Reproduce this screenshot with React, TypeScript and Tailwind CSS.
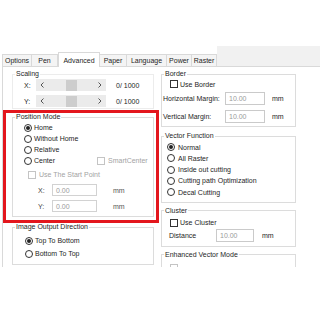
import { ReactNode } from "react";

interface GroupProp {
  title: string;
  className?: string;
  children: ReactNode;
}

const Group = ({ title, className = "", children }: GroupProp) => {
  return (
    <fieldset className={`border border-[#dcdcdc] ${className}`}>
      <legend className="ml-[2px] px-[1px] leading-[8px] text-[#1e1e1e]">
        {title}
      </legend>
      {children}
    </fieldset>
  );
};

const Radio = ({ checked = false }: { checked?: boolean }) => {
  return (
    <span className="w-[8px] h-[8px] shrink-0 rounded-full border border-[#333] bg-white flex items-center justify-center">
      {checked && <span className="w-[4px] h-[4px] rounded-full bg-[#222]" />}
    </span>
  );
};

const Check = ({ disabled = false }: { disabled?: boolean }) => {
  return (
    <span
      className={`w-[8px] h-[8px] shrink-0 border bg-white ${
        disabled ? "border-[#c4c4c4]" : "border-[#333]"
      }`}
    />
  );
};

const Input = ({ value, className = "" }: { value: string; className?: string }) => {
  return (
    <div
      className={`border border-[#cacaca] bg-white text-[#9a9a9a] flex items-center pl-[3px] ${className}`}
    >
      {value}
    </div>
  );
};

const Scroll = () => {
  return (
    <div className="w-[70px] h-[12px] bg-[#ebebeb] flex items-center">
      <svg width="4" height="6" viewBox="0 0 4 6" className="ml-[4px]">
        <polyline points="3.5,0.5 1,3 3.5,5.5" fill="none" stroke="#555" strokeWidth="1" />
      </svg>
      <div className="ml-[22px] w-[11px] h-[11px] bg-[#cdcdcd]" />
      <div className="flex-1" />
      <svg width="4" height="6" viewBox="0 0 4 6" className="mr-[4px]">
        <polyline points="0.5,0.5 3,3 0.5,5.5" fill="none" stroke="#555" strokeWidth="1" />
      </svg>
    </div>
  );
};

const tabs = ["Options", "Pen", "Advanced", "Paper", "Language", "Power", "Raster"];
const tabW: Record<string, string> = {
  Options: "w-[30px]",
  Pen: "w-[26px]",
  Advanced: "w-[42px]",
  Paper: "w-[27px]",
  Language: "w-[40px]",
  Power: "w-[25px]",
  Raster: "w-[25px]",
};

export default function App() {
  return (
    <div className="relative w-[320px] h-[320px] bg-white overflow-hidden font-['Liberation_Sans',Arial,sans-serif] text-[7px] leading-none text-[#1e1e1e]">
      <div className="h-[46px]" />
      {/* tab strip */}
      <div className="flex items-end h-[20px] pl-[2px]">
        {tabs.map((t, i) =>
          t === "Advanced" ? (
            <div
              key={t}
              className={`${tabW[t]} h-[15px] -mb-[1px] relative z-10 bg-white border-t border-x border-[#d9d9d9] flex justify-center pt-[4px]`}
            >
              {t}
            </div>
          ) : (
            <div
              key={t}
              className={`${tabW[t]} h-[12px] bg-[#f4f4f4] border-t border-r border-[#d9d9d9] flex items-center justify-center ${
                i === 0 ? "border-l" : ""
              }`}
            >
              {t}
            </div>
          )
        )}
        <div className="flex-1 self-stretch bg-[#f1f1f1]" />
      </div>

      {/* page */}
      <div className="ml-[2px] h-[201px] border-t border-l border-[#d9d9d9] bg-white overflow-hidden flex">
        {/* left column */}
        <div className="ml-[9px] w-[142px] flex flex-col">
          <Group title="Scaling" className="mt-[3px] border-[#ececec]">
            <div className="pt-[1px] pb-[1px] pl-[11px] flex flex-col gap-[4px]">
              {["X:", "Y:"].map((l) => (
                <div key={l} className="flex items-center h-[12px]">
                  <span className="w-[12px]">{l}</span>
                  <Scroll />
                  <span className="ml-[10px]">0/ 1000</span>
                </div>
              ))}
            </div>
          </Group>

          <Group title="Position Mode" className="mt-[4px]">
            <div className="pt-[1px] pb-[4px] flex flex-col">
              <div className="pl-[11px] flex flex-col">
                <div className="h-[11px] flex items-center gap-[2px]">
                  <Radio checked />
                  <span>Home</span>
                </div>
                <div className="h-[11px] flex items-center gap-[2px]">
                  <Radio />
                  <span>Without Home</span>
                </div>
                <div className="h-[11px] flex items-center gap-[2px]">
                  <Radio />
                  <span>Relative</span>
                </div>
                <div className="h-[11px] flex items-center">
                  <div className="w-[73px] flex items-center gap-[2px]">
                    <Radio />
                    <span>Center</span>
                  </div>
                  <div className="flex items-center gap-[3px] text-[#a3a3a3]">
                    <Check disabled />
                    <span>SmartCenter</span>
                  </div>
                </div>
              </div>
              <div className="mt-[3px] h-[11px] pl-[15px] flex items-center gap-[3px] text-[#a3a3a3]">
                <Check disabled />
                <span>Use The Start Point</span>
              </div>
              {["X:", "Y:"].map((l) => (
                <div key={l} className="mt-[4px] h-[12px] pl-[25px] flex items-center">
                  <span className="w-[14px] text-[#444]">{l}</span>
                  <Input value="0.00" className="w-[45px] h-[12px] border-[#d2d2d2]" />
                  <span className="ml-[16px] text-[#555]">mm</span>
                </div>
              ))}
            </div>
          </Group>

          <Group title="Image Output Direction" className="mt-[6px]">
            <div className="pt-[3px] pb-[4px] pl-[12px] flex flex-col">
              <div className="h-[13px] flex items-center gap-[2px]">
                <Radio checked />
                <span>Top To Bottom</span>
              </div>
              <div className="h-[13px] flex items-center gap-[2px]">
                <Radio />
                <span>Bottom To Top</span>
              </div>
            </div>
          </Group>
        </div>

        {/* right column */}
        <div className="ml-[7px] w-[135px] flex flex-col">
          <Group title="Border" className="mt-[3px]">
            <div className="pt-[1px] pb-[3px] flex flex-col">
              <div className="h-[10px] pl-[8px] flex items-center gap-[2px]">
                <Check />
                <span>Use Border</span>
              </div>
              <div className="mt-[3px] h-[13px] pl-[1px] flex items-center">
                <span className="w-[62px]">Horizontal Margin:</span>
                <Input value="10.00" className="w-[40px] h-[13px]" />
                <span className="ml-[7px]">mm</span>
              </div>
              <div className="mt-[5px] h-[13px] pl-[1px] flex items-center">
                <span className="w-[62px]">Vertical Margin:</span>
                <Input value="10.00" className="w-[40px] h-[13px]" />
                <span className="ml-[7px]">mm</span>
              </div>
            </div>
          </Group>

          <Group title="Vector Function" className="mt-[5px]">
            <div className="pt-[1.5px] pb-[4px] pl-[5px] flex flex-col">
              {["Normal", "All Raster", "Inside out cutting", "Cutting path Optimization", "Decal Cutting"].map(
                (v, i) => (
                  <div key={v} className="h-[11.25px] flex items-center gap-[3px]">
                    <Radio checked={i === 0} />
                    <span>{v}</span>
                  </div>
                )
              )}
            </div>
          </Group>

          <Group title="Cluster" className="mt-[4px]">
            <div className="pt-[3px] pb-[4px] flex flex-col">
              <div className="h-[10px] pl-[8px] flex items-center gap-[2px]">
                <Check />
                <span>Use Cluster</span>
              </div>
              <div className="mt-[1px] h-[13px] pl-[7px] flex items-center">
                <span className="w-[47px]">Distance</span>
                <Input value="10.00" className="w-[38px] h-[13px]" />
                <span className="ml-[8px]">mm</span>
              </div>
            </div>
          </Group>

          <Group title="Enhanced Vector Mode" className="mt-[4px]">
            <div className="pt-[4px] pb-[4px] flex flex-col">
              <div className="h-[10px] pl-[8px] flex items-center">
                <Check disabled />
              </div>
            </div>
          </Group>
        </div>
      </div>

      {/* red annotation frame */}
      <div className="absolute left-[3px] top-[110px] w-[156px] h-[113px] border-[3px] border-[#e3161d] pointer-events-none" />
    </div>
  );
}
